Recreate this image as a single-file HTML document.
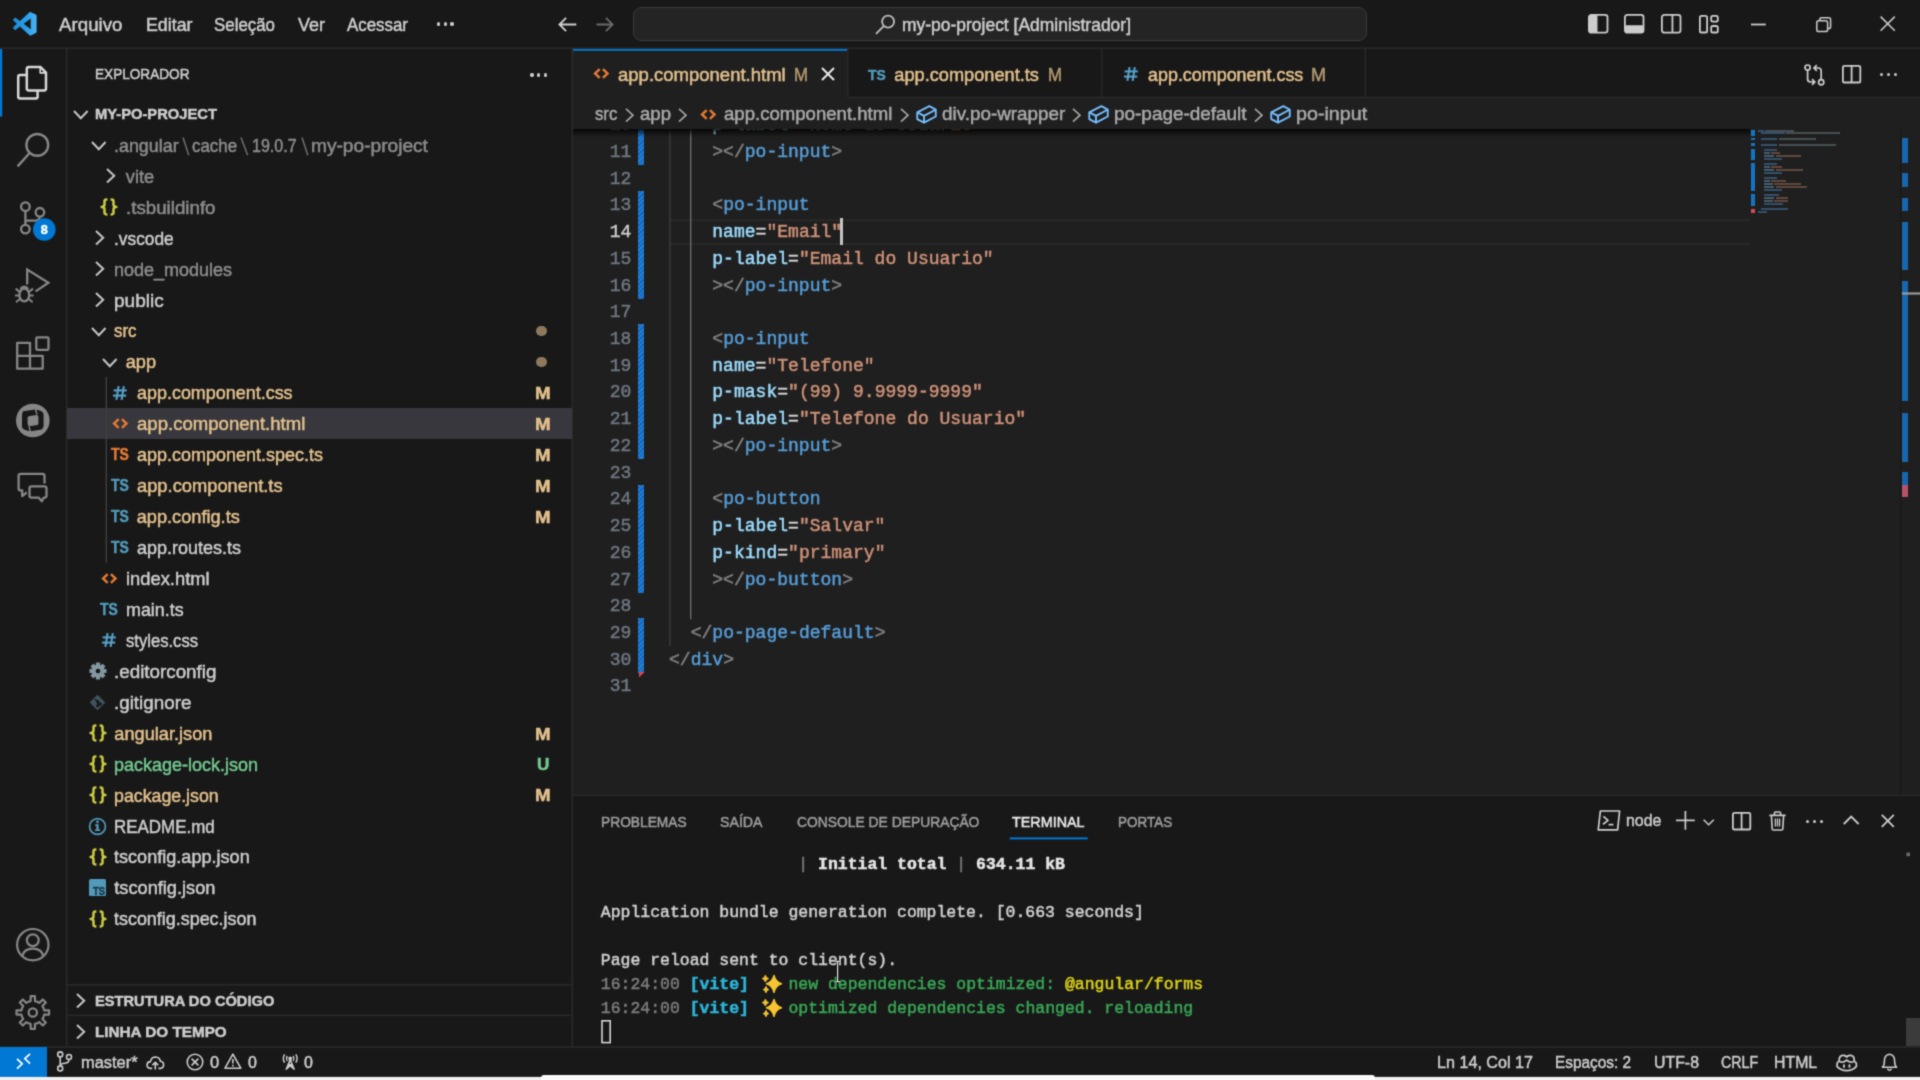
<!DOCTYPE html>
<html lang="pt-BR"><head><meta charset="utf-8"><title>app.component.html - my-po-project - Visual Studio Code</title><style>
html,body{margin:0;padding:0;background:#181818;}
html{width:1920px;height:1080px;overflow:hidden;}
body{width:1920px;height:1080px;position:relative;overflow:hidden;filter:url(#softblur);font-family:"Liberation Sans",sans-serif;color:#ccc;}
.t{position:absolute;line-height:1;white-space:pre;transform-origin:0 0;-webkit-text-stroke:0.5px currentColor;}
.s{font-family:"Liberation Sans",sans-serif;}
.m{font-family:"Liberation Mono",monospace;}
svg{overflow:visible}
</style></head><body>
<svg width="0" height="0" style="position:absolute"><defs><filter id="softblur" x="0" y="0" width="100%" height="100%" color-interpolation-filters="sRGB"><feConvolveMatrix order="3" kernelMatrix="0.0277 0.1110 0.0277 0.1110 0.4452 0.1110 0.0277 0.1110 0.0277" edgeMode="duplicate" preserveAlpha="true"/></filter></defs></svg>
<div style="position:absolute;left:573px;top:48px;width:1347px;height:748px;background:#1f1f1f;"></div>
<div style="position:absolute;left:573px;top:48px;width:1347px;height:50px;background:#181818;"></div>
<div style="position:absolute;left:573px;top:48px;width:274.5px;height:50px;background:#1f1f1f;"></div>
<svg style="position:absolute;left:573px;top:48px" width="275" height="3"><rect x="0.00" y="0.60" width="274.50" height="2.20" fill="#0078d4"/></svg>
<svg style="position:absolute;left:847px;top:96px" width="1073" height="3"><rect x="0.50" y="0.80" width="1072.50" height="1.40" fill="#2b2b2b"/></svg>
<svg style="position:absolute;left:847px;top:49px" width="2" height="48"><rect x="0.20" y="0.00" width="1.30" height="48.00" fill="#2b2b2b"/></svg>
<svg style="position:absolute;left:1101px;top:49px" width="2" height="48"><rect x="0.20" y="0.00" width="1.30" height="48.00" fill="#2b2b2b"/></svg>
<svg style="position:absolute;left:1364px;top:49px" width="2" height="48"><rect x="0.60" y="0.00" width="1.30" height="48.00" fill="#2b2b2b"/></svg>
<svg style="position:absolute;left:0px;top:47px" width="1920" height="2"><rect x="0.00" y="0.50" width="1920.00" height="1.40" fill="#2b2b2b"/></svg>
<svg style="position:absolute;left:66px;top:48px" width="2" height="999"><rect x="0.00" y="0.00" width="1.40" height="999.00" fill="#2b2b2b"/></svg>
<svg style="position:absolute;left:571px;top:48px" width="2" height="999"><rect x="0.60" y="0.00" width="1.40" height="999.00" fill="#2b2b2b"/></svg>
<svg style="position:absolute;left:0px;top:49px" width="3" height="68"><rect x="0.00" y="0.00" width="2.20" height="67.50" fill="#0078d4"/></svg>
<svg style="position:absolute;left:573px;top:795px" width="1347" height="2"><rect x="0.00" y="0.00" width="1347.00" height="1.40" fill="#2b2b2b"/></svg>
<div style="position:absolute;left:573px;top:796.4px;width:1347px;height:251px;background:#181818;"></div>
<svg style="position:absolute;left:0px;top:1046px" width="1920" height="2"><rect x="0.00" y="0.30" width="1920.00" height="1.40" fill="#2b2b2b"/></svg>
<div style="position:absolute;left:0px;top:1047.2px;width:47px;height:29.5px;background:#0078d4;"></div>
<svg style="position:absolute;left:0px;top:1076px" width="1920" height="5"><rect x="0.00" y="0.90" width="1920.00" height="3.40" fill="#f0f0f0"/></svg>
<div style="position:absolute;left:540.8px;top:1074.8px;width:834.2px;height:5.2px;background:#fbfbfb;border-radius:3px 3px 0 0;"></div>
<svg style="position:absolute;left:67px;top:984px" width="505" height="2"><rect x="0.40" y="0.10" width="504.20" height="1.40" fill="#2b2b2b"/></svg>
<svg style="position:absolute;left:67px;top:1014px" width="505" height="3"><rect x="0.40" y="0.70" width="504.20" height="1.40" fill="#2b2b2b"/></svg>
<div style="position:absolute;left:67.4px;top:408.2px;width:504.2px;height:30.9px;background:#37373d;"></div>
<div style="position:absolute;left:633px;top:6.6px;width:732px;height:32px;border:1.4px solid #3c3c3c;border-radius:8.5px;background:#242424"></div>
<span class="t s" style="left:95.0px;top:66.4px;font-size:15.4px;color:#cccccc;transform:scaleX(0.8838);">EXPLORADOR</span>
<div style="position:absolute;left:530.4px;top:73.4px;width:3.3px;height:3.3px;border-radius:50%;background:#ccc"></div>
<div style="position:absolute;left:537.0px;top:73.4px;width:3.3px;height:3.3px;border-radius:50%;background:#ccc"></div>
<div style="position:absolute;left:543.6px;top:73.4px;width:3.3px;height:3.3px;border-radius:50%;background:#ccc"></div>
<span class="t s" style="left:95.0px;top:105.8px;font-size:15.4px;color:#cccccc;font-weight:700;transform:scaleX(0.9567);">MY-PO-PROJECT</span>
<svg style="position:absolute;left:71.5px;top:109.0px" width="17.6" height="11.2"><path d="M2 2 L8.8 9.2 L15.6 2" fill="none" stroke="#c5c5c5" stroke-width="2.0"/></svg>
<span class="t s" style="left:95.0px;top:992.9px;font-size:15.4px;color:#cccccc;font-weight:700;transform:scaleX(0.9517);">ESTRUTURA DO CÓDIGO</span>
<svg style="position:absolute;left:75.4px;top:992.2px" width="11.2" height="17.6"><path d="M2 2 L9.2 8.8 L2 15.6" fill="none" stroke="#c5c5c5" stroke-width="2.0"/></svg>
<span class="t s" style="left:95.0px;top:1024.0px;font-size:15.4px;color:#cccccc;font-weight:700;transform:scaleX(0.9916);">LINHA DO TEMPO</span>
<svg style="position:absolute;left:75.4px;top:1023.2px" width="11.2" height="17.6"><path d="M2 2 L9.2 8.8 L2 15.6" fill="none" stroke="#c5c5c5" stroke-width="2.0"/></svg>
<svg style="position:absolute;left:89.6px;top:140.3px" width="17.6" height="11.2"><path d="M2 2 L8.8 9.2 L15.6 2" fill="none" stroke="#c5c5c5" stroke-width="2.0"/></svg>
<span class="t s" style="left:114.3px;top:136.8px;font-size:18.2px;color:#8c8c8c;transform:scaleX(0.9827);">.angular</span>
<svg style="position:absolute;left:181.9px;top:136.9px" width="7.8" height="19"><path d="M1 0.6 L6.8 18.2" stroke="#6f6f6f" stroke-width="1.5" fill="none"/></svg>
<span class="t s" style="left:192.2px;top:136.8px;font-size:18.2px;color:#8c8c8c;transform:scaleX(0.9290);">cache</span>
<svg style="position:absolute;left:240.3px;top:136.9px" width="8.7" height="19"><path d="M1 0.6 L7.7 18.2" stroke="#6f6f6f" stroke-width="1.5" fill="none"/></svg>
<span class="t s" style="left:251.9px;top:136.8px;font-size:18.2px;color:#8c8c8c;transform:scaleX(0.8818);">19.0.7</span>
<svg style="position:absolute;left:300.9px;top:136.9px" width="7.8" height="19"><path d="M1 0.6 L6.8 18.2" stroke="#6f6f6f" stroke-width="1.5" fill="none"/></svg>
<span class="t s" style="left:310.9px;top:136.8px;font-size:18.2px;color:#8c8c8c;transform:scaleX(1.0514);">my-po-project</span>
<svg style="position:absolute;left:105.0px;top:167.4px" width="11.2" height="17.6"><path d="M2 2 L9.2 8.8 L2 15.6" fill="none" stroke="#c5c5c5" stroke-width="2.0"/></svg>
<span class="t s" style="left:125.8px;top:167.7px;font-size:18.2px;color:#8c8c8c;">vite</span>
<svg style="position:absolute;left:99.5px;top:198.2px" width="18" height="18" viewBox="0 0 18 18"><g fill="none" stroke="#cbcb41" stroke-width="2.5" stroke-linejoin="round" stroke-linecap="butt"><path d="M7.4 1.6 H6.4 Q4.5 1.6 4.5 3.4 V6.6 Q4.5 9 1.6 9 Q4.5 9 4.5 11.4 V14.6 Q4.5 16.4 6.4 16.4 H7.4"/><path d="M10.6 1.6 H11.6 Q13.5 1.6 13.5 3.4 V6.6 Q13.5 9 16.4 9 Q13.5 9 13.5 11.4 V14.6 Q13.5 16.4 11.6 16.4 H10.6"/></g></svg>
<span class="t s" style="left:125.8px;top:198.7px;font-size:18.2px;color:#8c8c8c;transform:scaleX(1.0293);">.tsbuildinfo</span>
<svg style="position:absolute;left:94.0px;top:229.3px" width="11.2" height="17.6"><path d="M2 2 L9.2 8.8 L2 15.6" fill="none" stroke="#c5c5c5" stroke-width="2.0"/></svg>
<span class="t s" style="left:114.3px;top:229.6px;font-size:18.2px;color:#cccccc;transform:scaleX(0.9523);">.vscode</span>
<svg style="position:absolute;left:94.0px;top:260.3px" width="11.2" height="17.6"><path d="M2 2 L9.2 8.8 L2 15.6" fill="none" stroke="#c5c5c5" stroke-width="2.0"/></svg>
<span class="t s" style="left:114.3px;top:260.6px;font-size:18.2px;color:#8c8c8c;transform:scaleX(0.9889);">node_modules</span>
<svg style="position:absolute;left:94.0px;top:291.2px" width="11.2" height="17.6"><path d="M2 2 L9.2 8.8 L2 15.6" fill="none" stroke="#c5c5c5" stroke-width="2.0"/></svg>
<span class="t s" style="left:114.3px;top:291.5px;font-size:18.2px;color:#cccccc;transform:scaleX(1.0456);">public</span>
<svg style="position:absolute;left:90.0px;top:325.9px" width="17.6" height="11.2"><path d="M2 2 L8.8 9.2 L15.6 2" fill="none" stroke="#c5c5c5" stroke-width="2.0"/></svg>
<span class="t s" style="left:114.3px;top:322.4px;font-size:18.2px;color:#e2c08d;transform:scaleX(0.9237);">src</span>
<svg style="position:absolute;left:101.1px;top:356.9px" width="17.6" height="11.2"><path d="M2 2 L8.8 9.2 L15.6 2" fill="none" stroke="#c5c5c5" stroke-width="2.0"/></svg>
<span class="t s" style="left:125.7px;top:353.4px;font-size:18.2px;color:#e2c08d;">app</span>
<div style="position:absolute;left:536.2px;top:325.5px;width:10.8px;height:10.8px;border-radius:50%;background:#8d7a5c"></div>
<div style="position:absolute;left:536.2px;top:356.5px;width:10.8px;height:10.8px;border-radius:50%;background:#8d7a5c"></div>
<svg style="position:absolute;left:105px;top:377px" width="2" height="186"><rect x="0.60" y="0.00" width="1.40" height="185.60" fill="#3f3f3f"/></svg>
<svg style="position:absolute;left:112.3px;top:384.8px" width="16" height="16" viewBox="0 0 16 16"><g fill="none" stroke="#56a0c8" stroke-width="2.1"><path d="M6.6 1.2 L4.4 14.8"/><path d="M11.8 1.2 L9.6 14.8"/><path d="M1.6 5.4 H14.8"/><path d="M1 10.6 H14.2"/></g></svg>
<span class="t s" style="left:136.7px;top:384.3px;font-size:18.2px;color:#e2c08d;transform:scaleX(0.9865);">app.component.css</span>
<span class="t s" style="left:534.6px;top:385.1px;font-size:17px;color:#e2c08d;font-weight:700;transform:scaleX(1.1008);">M</span>
<svg style="position:absolute;left:112.0px;top:417.8px" width="16.6" height="11.0" viewBox="0 0 18 12"><g fill="none" stroke="#e37933" stroke-width="2.7" stroke-linejoin="miter"><path d="M7.2 1.2 L2.2 6 L7.2 10.8"/><path d="M10.8 1.2 L15.8 6 L10.8 10.8"/></g></svg>
<span class="t s" style="left:136.7px;top:415.3px;font-size:18.2px;color:#e2c08d;transform:scaleX(1.0212);">app.component.html</span>
<span class="t s" style="left:534.6px;top:416.1px;font-size:17px;color:#e2c08d;font-weight:700;transform:scaleX(1.1008);">M</span>
<span class="t s" style="left:111.4px;top:447.2px;font-size:15.6px;color:#e37933;font-weight:700;transform:scaleX(0.8928);">TS</span>
<span class="t s" style="left:136.7px;top:446.2px;font-size:18.2px;color:#e2c08d;transform:scaleX(0.9890);">app.component.spec.ts</span>
<span class="t s" style="left:534.6px;top:447.0px;font-size:17px;color:#e2c08d;font-weight:700;transform:scaleX(1.1008);">M</span>
<span class="t s" style="left:111.4px;top:478.1px;font-size:15.6px;color:#519aba;font-weight:700;transform:scaleX(0.8928);">TS</span>
<span class="t s" style="left:136.7px;top:477.1px;font-size:18.2px;color:#e2c08d;transform:scaleX(1.0070);">app.component.ts</span>
<span class="t s" style="left:534.6px;top:477.9px;font-size:17px;color:#e2c08d;font-weight:700;transform:scaleX(1.1008);">M</span>
<span class="t s" style="left:111.4px;top:509.1px;font-size:15.6px;color:#519aba;font-weight:700;transform:scaleX(0.8928);">TS</span>
<span class="t s" style="left:136.7px;top:508.1px;font-size:18.2px;color:#e2c08d;">app.config.ts</span>
<span class="t s" style="left:534.6px;top:508.9px;font-size:17px;color:#e2c08d;font-weight:700;transform:scaleX(1.1008);">M</span>
<span class="t s" style="left:111.4px;top:540.0px;font-size:15.6px;color:#519aba;font-weight:700;transform:scaleX(0.8928);">TS</span>
<span class="t s" style="left:136.7px;top:539.0px;font-size:18.2px;color:#cccccc;transform:scaleX(0.9890);">app.routes.ts</span>
<svg style="position:absolute;left:100.5px;top:572.5px" width="16.6" height="11.0" viewBox="0 0 18 12"><g fill="none" stroke="#e37933" stroke-width="2.7" stroke-linejoin="miter"><path d="M7.2 1.2 L2.2 6 L7.2 10.8"/><path d="M10.8 1.2 L15.8 6 L10.8 10.8"/></g></svg>
<span class="t s" style="left:125.7px;top:570.0px;font-size:18.2px;color:#cccccc;transform:scaleX(1.0084);">index.html</span>
<span class="t s" style="left:99.9px;top:601.9px;font-size:15.6px;color:#519aba;font-weight:700;transform:scaleX(0.8928);">TS</span>
<span class="t s" style="left:125.7px;top:600.9px;font-size:18.2px;color:#cccccc;transform:scaleX(0.9825);">main.ts</span>
<svg style="position:absolute;left:100.8px;top:632.3px" width="16" height="16" viewBox="0 0 16 16"><g fill="none" stroke="#56a0c8" stroke-width="2.1"><path d="M6.6 1.2 L4.4 14.8"/><path d="M11.8 1.2 L9.6 14.8"/><path d="M1.6 5.4 H14.8"/><path d="M1 10.6 H14.2"/></g></svg>
<span class="t s" style="left:125.7px;top:631.8px;font-size:18.2px;color:#cccccc;transform:scaleX(0.9134);">styles.css</span>
<svg style="position:absolute;left:88.6px;top:662.3px" width="18" height="18" viewBox="-9 -9 18 18"><g fill="#8497a0"><rect x="-2.1" y="-8.5" width="4.2" height="4" rx="0.6" transform="rotate(0)"/><rect x="-2.1" y="-8.5" width="4.2" height="4" rx="0.6" transform="rotate(45)"/><rect x="-2.1" y="-8.5" width="4.2" height="4" rx="0.6" transform="rotate(90)"/><rect x="-2.1" y="-8.5" width="4.2" height="4" rx="0.6" transform="rotate(135)"/><rect x="-2.1" y="-8.5" width="4.2" height="4" rx="0.6" transform="rotate(180)"/><rect x="-2.1" y="-8.5" width="4.2" height="4" rx="0.6" transform="rotate(225)"/><rect x="-2.1" y="-8.5" width="4.2" height="4" rx="0.6" transform="rotate(270)"/><rect x="-2.1" y="-8.5" width="4.2" height="4" rx="0.6" transform="rotate(315)"/></g><circle r="4.4" fill="none" stroke="#8497a0" stroke-width="4.2"/></svg>
<span class="t s" style="left:114.3px;top:662.8px;font-size:18.2px;color:#cccccc;transform:scaleX(1.0334);">.editorconfig</span>
<svg style="position:absolute;left:89.1px;top:693.7px" width="17" height="17" viewBox="-8.5 -8.5 17 17"><rect x="-5.6" y="-5.6" width="11.2" height="11.2" rx="1.2" transform="rotate(45)" fill="#41535b"/><g stroke="#181818" stroke-width="1.3" fill="#181818"><path d="M-2.5 -3.5 L0.2 -0.8 M0.2 -0.8 V3.4 M0.2 -0.8 L2.8 1.6" fill="none"/><circle cx="0.2" cy="3.2" r="1"/><circle cx="2.8" cy="1.6" r="1"/><circle cx="0.2" cy="-0.8" r="1"/></g></svg>
<span class="t s" style="left:114.3px;top:693.7px;font-size:18.2px;color:#cccccc;transform:scaleX(1.0344);">.gitignore</span>
<svg style="position:absolute;left:88.6px;top:724.2px" width="18" height="18" viewBox="0 0 18 18"><g fill="none" stroke="#cbcb41" stroke-width="2.5" stroke-linejoin="round" stroke-linecap="butt"><path d="M7.4 1.6 H6.4 Q4.5 1.6 4.5 3.4 V6.6 Q4.5 9 1.6 9 Q4.5 9 4.5 11.4 V14.6 Q4.5 16.4 6.4 16.4 H7.4"/><path d="M10.6 1.6 H11.6 Q13.5 1.6 13.5 3.4 V6.6 Q13.5 9 16.4 9 Q13.5 9 13.5 11.4 V14.6 Q13.5 16.4 11.6 16.4 H10.6"/></g></svg>
<span class="t s" style="left:114.3px;top:724.7px;font-size:18.2px;color:#e2c08d;">angular.json</span>
<span class="t s" style="left:534.6px;top:725.5px;font-size:17px;color:#e2c08d;font-weight:700;transform:scaleX(1.1008);">M</span>
<svg style="position:absolute;left:88.6px;top:755.1px" width="18" height="18" viewBox="0 0 18 18"><g fill="none" stroke="#cbcb41" stroke-width="2.5" stroke-linejoin="round" stroke-linecap="butt"><path d="M7.4 1.6 H6.4 Q4.5 1.6 4.5 3.4 V6.6 Q4.5 9 1.6 9 Q4.5 9 4.5 11.4 V14.6 Q4.5 16.4 6.4 16.4 H7.4"/><path d="M10.6 1.6 H11.6 Q13.5 1.6 13.5 3.4 V6.6 Q13.5 9 16.4 9 Q13.5 9 13.5 11.4 V14.6 Q13.5 16.4 11.6 16.4 H10.6"/></g></svg>
<span class="t s" style="left:114.3px;top:755.6px;font-size:18.2px;color:#73c991;transform:scaleX(0.9891);">package-lock.json</span>
<span class="t s" style="left:537.4px;top:756.4px;font-size:17px;color:#73c991;font-weight:700;transform:scaleX(1.0097);">U</span>
<svg style="position:absolute;left:88.6px;top:786.0px" width="18" height="18" viewBox="0 0 18 18"><g fill="none" stroke="#cbcb41" stroke-width="2.5" stroke-linejoin="round" stroke-linecap="butt"><path d="M7.4 1.6 H6.4 Q4.5 1.6 4.5 3.4 V6.6 Q4.5 9 1.6 9 Q4.5 9 4.5 11.4 V14.6 Q4.5 16.4 6.4 16.4 H7.4"/><path d="M10.6 1.6 H11.6 Q13.5 1.6 13.5 3.4 V6.6 Q13.5 9 16.4 9 Q13.5 9 13.5 11.4 V14.6 Q13.5 16.4 11.6 16.4 H10.6"/></g></svg>
<span class="t s" style="left:114.3px;top:786.5px;font-size:18.2px;color:#e2c08d;transform:scaleX(0.9768);">package.json</span>
<span class="t s" style="left:534.6px;top:787.3px;font-size:17px;color:#e2c08d;font-weight:700;transform:scaleX(1.1008);">M</span>
<svg style="position:absolute;left:88.1px;top:816.5px" width="19" height="19" viewBox="-9.5 -9.5 19 19"><circle r="7.9" fill="none" stroke="#519aba" stroke-width="1.7"/><rect x="-1.2" y="-2.2" width="2.4" height="6.6" fill="#519aba"/><rect x="-2.4" y="-2.2" width="2.4" height="1.6" fill="#519aba"/><rect x="-2.6" y="3" width="5.2" height="1.5" fill="#519aba"/><circle cy="-4.6" r="1.4" fill="#519aba"/></svg>
<span class="t s" style="left:114.3px;top:817.5px;font-size:18.2px;color:#cccccc;transform:scaleX(0.9312);">README.md</span>
<svg style="position:absolute;left:88.6px;top:847.9px" width="18" height="18" viewBox="0 0 18 18"><g fill="none" stroke="#cbcb41" stroke-width="2.5" stroke-linejoin="round" stroke-linecap="butt"><path d="M7.4 1.6 H6.4 Q4.5 1.6 4.5 3.4 V6.6 Q4.5 9 1.6 9 Q4.5 9 4.5 11.4 V14.6 Q4.5 16.4 6.4 16.4 H7.4"/><path d="M10.6 1.6 H11.6 Q13.5 1.6 13.5 3.4 V6.6 Q13.5 9 16.4 9 Q13.5 9 13.5 11.4 V14.6 Q13.5 16.4 11.6 16.4 H10.6"/></g></svg>
<span class="t s" style="left:114.3px;top:848.4px;font-size:18.2px;color:#cccccc;transform:scaleX(0.9941);">tsconfig.app.json</span>
<div style="position:absolute;left:88.8px;top:879.3px;width:17.6px;height:17.2px;background:#519aba;border-radius:1.5px"></div>
<span class="t s" style="left:93.0px;top:886.2px;font-size:10.5px;color:#1c3a4a;font-weight:700;transform:scaleX(0.8941);">TS</span>
<span class="t s" style="left:114.3px;top:879.4px;font-size:18.2px;color:#cccccc;">tsconfig.json</span>
<svg style="position:absolute;left:88.6px;top:909.8px" width="18" height="18" viewBox="0 0 18 18"><g fill="none" stroke="#cbcb41" stroke-width="2.5" stroke-linejoin="round" stroke-linecap="butt"><path d="M7.4 1.6 H6.4 Q4.5 1.6 4.5 3.4 V6.6 Q4.5 9 1.6 9 Q4.5 9 4.5 11.4 V14.6 Q4.5 16.4 6.4 16.4 H7.4"/><path d="M10.6 1.6 H11.6 Q13.5 1.6 13.5 3.4 V6.6 Q13.5 9 16.4 9 Q13.5 9 13.5 11.4 V14.6 Q13.5 16.4 11.6 16.4 H10.6"/></g></svg>
<span class="t s" style="left:114.3px;top:910.3px;font-size:18.2px;color:#cccccc;transform:scaleX(0.9849);">tsconfig.spec.json</span>
<svg style="position:absolute;left:12.8px;top:12.2px" width="23.6" height="23.6" viewBox="0 0 100 100"><defs><linearGradient id="vg" x1="0" x2="1" y1="0" y2="0"><stop offset="0" stop-color="#1f88d6"/><stop offset="0.6" stop-color="#2c9fec"/><stop offset="1" stop-color="#4ab4f6"/></linearGradient></defs><path fill="url(#vg)" fill-rule="evenodd" d="M70.9119 99.3171C72.4869 99.9307 74.2828 99.8914 75.8725 99.1264L96.4608 89.2197C98.6242 88.1787 100 85.9892 100 83.5872V16.4133C100 14.0113 98.6243 11.8218 96.4609 10.7808L75.8725 0.873756C73.7862 -0.130129 71.3446 0.11576 69.5135 1.44695C69.252 1.63711 69.0028 1.84943 68.769 2.08341L29.3551 38.0415L12.1872 25.0096C10.589 23.7965 8.35363 23.8959 6.86933 25.2461L1.36303 30.2549C-0.452552 31.9064 -0.454633 34.7627 1.35853 36.417L16.2471 50.0001L1.35853 63.5832C-0.454633 65.2374 -0.452552 68.0938 1.36303 69.7453L6.86933 74.7541C8.35363 76.1043 10.589 76.2037 12.1872 74.9905L29.3551 61.9587L68.769 97.9167C69.3925 98.5406 70.1246 99.0104 70.9119 99.3171ZM75.0152 27.2989L45.1091 50.0001L75.0152 72.7012V27.2989Z"/></svg>
<span class="t s" style="left:59.0px;top:16.0px;font-size:18.2px;color:#ccc;transform:scaleX(1.0296);">Arquivo</span>
<span class="t s" style="left:145.5px;top:16.0px;font-size:18.2px;color:#ccc;transform:scaleX(0.9786);">Editar</span>
<span class="t s" style="left:214.0px;top:16.0px;font-size:18.2px;color:#ccc;transform:scaleX(0.9280);">Seleção</span>
<span class="t s" style="left:297.5px;top:16.0px;font-size:18.2px;color:#ccc;transform:scaleX(0.9886);">Ver</span>
<span class="t s" style="left:347.0px;top:16.0px;font-size:18.2px;color:#ccc;transform:scaleX(0.9284);">Acessar</span>
<div style="position:absolute;left:436.6px;top:22.4px;width:3.5px;height:3.5px;border-radius:50%;background:#ccc"></div>
<div style="position:absolute;left:443.5px;top:22.4px;width:3.5px;height:3.5px;border-radius:50%;background:#ccc"></div>
<div style="position:absolute;left:450.4px;top:22.4px;width:3.5px;height:3.5px;border-radius:50%;background:#ccc"></div>
<svg style="position:absolute;left:558.4px;top:17.1px" width="18.800000000000068" height="15"><path d="M18.300000000000068 7.5 H1.4 M8.1 0.8 L1.4 7.5 L8.1 14.2" fill="none" stroke="#d0d0d0" stroke-width="1.8"/></svg>
<svg style="position:absolute;left:595.8px;top:17.1px" width="18.0" height="15"><path d="M0.5 7.5 H16.6 M9.9 0.8 L16.6 7.5 L9.9 14.2" fill="none" stroke="#6a6a6a" stroke-width="1.8"/></svg>
<svg style="position:absolute;left:875px;top:13.6px" width="21" height="21" viewBox="0 0 21 21"><circle cx="13.1" cy="7.6" r="6" fill="none" stroke="#bdbdbd" stroke-width="1.8"/><path d="M8.9 11.9 L1 19.8" stroke="#bdbdbd" stroke-width="1.9" fill="none"/></svg>
<span class="t s" style="left:901.7px;top:16.5px;font-size:17.8px;color:#cccccc;transform:scaleX(0.9819);">my-po-project [Administrador]</span>
<svg style="position:absolute;left:1587.6px;top:14px" width="20.4" height="19.6"><rect x="0.9" y="0.9" width="18.599999999999998" height="17.8" rx="2.4" fill="none" stroke="#cccccc" stroke-width="1.8"/><rect x="0.9" y="0.9" width="8.568" height="17.8" rx="1.5" fill="#cccccc"/></svg>
<svg style="position:absolute;left:1623.8px;top:14px" width="20.4" height="19.6"><rect x="0.9" y="0.9" width="18.599999999999998" height="17.8" rx="2.4" fill="none" stroke="#cccccc" stroke-width="1.8"/><rect x="0.9" y="11.368" width="18.599999999999998" height="7.332000000000001" rx="1.5" fill="#cccccc"/></svg>
<svg style="position:absolute;left:1660.8px;top:14px" width="20.4" height="19.6"><rect x="0.9" y="0.9" width="18.599999999999998" height="17.8" rx="2.4" fill="none" stroke="#cccccc" stroke-width="1.8"/><path d="M11.424 1 V18.6" stroke="#cccccc" stroke-width="1.8"/></svg>
<svg style="position:absolute;left:1698.6px;top:14.6px" width="20" height="19"><g fill="none" stroke="#cccccc" stroke-width="1.8"><rect x="0.9" y="0.9" width="7.2" height="16.6" rx="1.6"/><rect x="12.2" y="0.9" width="6.6" height="5.8" rx="1.6"/><rect x="12.2" y="11" width="6.6" height="6.5" rx="1.6"/></g></svg>
<svg style="position:absolute;left:1751px;top:23px" width="15" height="3"><rect x="0.00" y="0.60" width="14.80" height="1.80" fill="#cccccc"/></svg>
<svg style="position:absolute;left:1815.6px;top:16.6px" width="16" height="16"><g fill="none" stroke="#cccccc" stroke-width="1.5"><rect x="0.8" y="3.8" width="10.8" height="10.8" rx="1.8"/><path d="M3.8 3.6 V2.6 Q3.8 0.8 5.6 0.8 H12.6 Q14.6 0.8 14.6 2.8 V9.8 Q14.6 11.6 12.8 11.6 H11.8"/></g></svg>
<svg style="position:absolute;left:1880px;top:16.4px" width="15.4" height="15.4"><path d="M0.6 0.6 L14.8 14.8 M14.8 0.6 L0.6 14.8" stroke="#cccccc" stroke-width="1.5" fill="none"/></svg>
<svg style="position:absolute;left:593.3px;top:67.9px" width="16.6" height="11.0" viewBox="0 0 18 12"><g fill="none" stroke="#e37933" stroke-width="2.7" stroke-linejoin="miter"><path d="M7.2 1.2 L2.2 6 L7.2 10.8"/><path d="M10.8 1.2 L15.8 6 L10.8 10.8"/></g></svg>
<span class="t s" style="left:618.3px;top:66.2px;font-size:18.2px;color:#e2c08d;transform:scaleX(1.0175);">app.component.html</span>
<span class="t s" style="left:794.3px;top:66.2px;font-size:18.2px;color:#b39a70;transform:scaleX(0.9237);">M</span>
<svg style="position:absolute;left:821.4px;top:67.2px" width="14" height="14"><path d="M1 1 L13 13 M13 1 L1 13" stroke="#e8e8e8" stroke-width="2" fill="none"/></svg>
<span class="t s" style="left:868.3px;top:66.7px;font-size:15.5px;color:#519aba;font-weight:700;transform:scaleX(0.8934);">TS</span>
<span class="t s" style="left:894.3px;top:66.2px;font-size:18.2px;color:#e2c08d;">app.component.ts</span>
<span class="t s" style="left:1047.7px;top:66.2px;font-size:18.2px;color:#b39a70;transform:scaleX(0.9237);">M</span>
<svg style="position:absolute;left:1122.5px;top:65.6px" width="16" height="16" viewBox="0 0 16 16"><g fill="none" stroke="#56a0c8" stroke-width="2.1"><path d="M6.6 1.2 L4.4 14.8"/><path d="M11.8 1.2 L9.6 14.8"/><path d="M1.6 5.4 H14.8"/><path d="M1 10.6 H14.2"/></g></svg>
<span class="t s" style="left:1147.7px;top:66.2px;font-size:18.2px;color:#e2c08d;transform:scaleX(0.9846);">app.component.css</span>
<span class="t s" style="left:1310.6px;top:66.2px;font-size:18.2px;color:#b39a70;transform:scaleX(0.9897);">M</span>
<svg style="position:absolute;left:1804.4px;top:64.4px" width="21" height="22" viewBox="0 0 21 22"><g fill="none" stroke="#cccccc" stroke-width="1.7"><circle cx="3.6" cy="3.6" r="2.6"/><circle cx="17.2" cy="18.2" r="2.6"/><path d="M3.6 6.4 V15 Q3.6 18 6.6 18 H10.4 M8 15.2 L10.8 18 L8 20.8"/><path d="M17.2 15.4 V7 Q17.2 4 14.2 4 H10.4 M12.8 1.2 L10 4 L12.8 6.8"/></g></svg>
<svg style="position:absolute;left:1842.4px;top:64.6px" width="19.2" height="18.4"><g fill="none" stroke="#cccccc" stroke-width="1.8"><rect x="0.9" y="0.9" width="17.4" height="16.6" rx="1.6"/><path d="M9.6 1 V17.4"/></g></svg>
<div style="position:absolute;left:1879.6px;top:72.8px;width:3.5px;height:3.5px;border-radius:50%;background:#ccc"></div>
<div style="position:absolute;left:1886.6px;top:72.8px;width:3.5px;height:3.5px;border-radius:50%;background:#ccc"></div>
<div style="position:absolute;left:1893.6px;top:72.8px;width:3.5px;height:3.5px;border-radius:50%;background:#ccc"></div>
<span class="t s" style="left:595.0px;top:105.1px;font-size:18.2px;color:#a9a9a9;transform:scaleX(0.9196);">src</span>
<svg style="position:absolute;left:625.0px;top:108.0px" width="9.4" height="14.4"><path d="M1 0.8 L8.0 7.2 L1 13.6" fill="none" stroke="#a9a9a9" stroke-width="1.6"/></svg>
<span class="t s" style="left:640.0px;top:105.1px;font-size:18.2px;color:#a9a9a9;transform:scaleX(1.0211);">app</span>
<svg style="position:absolute;left:678.3px;top:108.0px" width="9.4" height="14.4"><path d="M1 0.8 L8.0 7.2 L1 13.6" fill="none" stroke="#a9a9a9" stroke-width="1.6"/></svg>
<svg style="position:absolute;left:699.7px;top:108.7px" width="16.6" height="11.0" viewBox="0 0 18 12"><g fill="none" stroke="#e37933" stroke-width="2.7" stroke-linejoin="miter"><path d="M7.2 1.2 L2.2 6 L7.2 10.8"/><path d="M10.8 1.2 L15.8 6 L10.8 10.8"/></g></svg>
<span class="t s" style="left:724.3px;top:105.1px;font-size:18.2px;color:#a9a9a9;transform:scaleX(1.0218);">app.component.html</span>
<svg style="position:absolute;left:900.0px;top:108.0px" width="9.4" height="14.4"><path d="M1 0.8 L8.0 7.2 L1 13.6" fill="none" stroke="#a9a9a9" stroke-width="1.6"/></svg>
<svg style="position:absolute;left:915.7px;top:105.1px" width="21" height="18.9" viewBox="0 0 21 19"><g fill="none" stroke="#75beff" stroke-width="1.9" stroke-linejoin="round"><path d="M13.4 1.2 L19.8 4.6 V11.6 L8 17.8 L1.2 14.2 V7.4 Z"/><path d="M1.4 7.4 L8 11 L19.6 4.8 M8 11 V17.6"/></g></svg>
<span class="t s" style="left:941.7px;top:105.1px;font-size:18.2px;color:#a9a9a9;transform:scaleX(1.0365);">div.po-wrapper</span>
<svg style="position:absolute;left:1072.3px;top:108.0px" width="9.4" height="14.4"><path d="M1 0.8 L8.0 7.2 L1 13.6" fill="none" stroke="#a9a9a9" stroke-width="1.6"/></svg>
<svg style="position:absolute;left:1088.3px;top:105.1px" width="21" height="18.9" viewBox="0 0 21 19"><g fill="none" stroke="#75beff" stroke-width="1.9" stroke-linejoin="round"><path d="M13.4 1.2 L19.8 4.6 V11.6 L8 17.8 L1.2 14.2 V7.4 Z"/><path d="M1.4 7.4 L8 11 L19.6 4.8 M8 11 V17.6"/></g></svg>
<span class="t s" style="left:1114.3px;top:105.1px;font-size:18.2px;color:#a9a9a9;transform:scaleX(1.0406);">po-page-default</span>
<svg style="position:absolute;left:1254.4px;top:108.0px" width="9.4" height="14.4"><path d="M1 0.8 L8.0 7.2 L1 13.6" fill="none" stroke="#a9a9a9" stroke-width="1.6"/></svg>
<svg style="position:absolute;left:1270.0px;top:105.1px" width="21" height="18.9" viewBox="0 0 21 19"><g fill="none" stroke="#75beff" stroke-width="1.9" stroke-linejoin="round"><path d="M13.4 1.2 L19.8 4.6 V11.6 L8 17.8 L1.2 14.2 V7.4 Z"/><path d="M1.4 7.4 L8 11 L19.6 4.8 M8 11 V17.6"/></g></svg>
<span class="t s" style="left:1296.4px;top:105.1px;font-size:18.2px;color:#a9a9a9;transform:scaleX(1.0831);">po-input</span>
<div style="position:absolute;left:573px;top:128.8px;width:1327.4px;height:666.2px;overflow:hidden">
<svg style="position:absolute;left:96px;top:90px" width="1081" height="2"><rect x="0.40" y="0.40" width="1080.60" height="1.40" fill="#2c2c2c"/></svg>
<svg style="position:absolute;left:96px;top:114px" width="1081" height="2"><rect x="0.40" y="0.32" width="1080.60" height="1.40" fill="#2c2c2c"/></svg>
<svg style="position:absolute;left:96px;top:0px" width="2" height="518"><rect x="0.20" y="0.00" width="1.40" height="517.02" fill="#3b3b3b"/></svg>
<svg style="position:absolute;left:117px;top:0px" width="2" height="491"><rect x="0.00" y="0.00" width="1.40" height="490.30" fill="#6a6a6a"/></svg>
<div style="position:absolute;left:65.2px;top:-18.1px;width:5.8px;height:54.4px;background:repeating-linear-gradient(135deg,#2380d8 0 1.6px,#1468bd 1.6px 3.2px)"></div>
<div style="position:absolute;left:65.2px;top:62.1px;width:5.8px;height:107.9px;background:repeating-linear-gradient(135deg,#2380d8 0 1.6px,#1468bd 1.6px 3.2px)"></div>
<div style="position:absolute;left:65.2px;top:195.7px;width:5.8px;height:134.6px;background:repeating-linear-gradient(135deg,#2380d8 0 1.6px,#1468bd 1.6px 3.2px)"></div>
<div style="position:absolute;left:65.2px;top:356.0px;width:5.8px;height:107.9px;background:repeating-linear-gradient(135deg,#2380d8 0 1.6px,#1468bd 1.6px 3.2px)"></div>
<div style="position:absolute;left:65.2px;top:489.6px;width:5.8px;height:54.4px;background:repeating-linear-gradient(135deg,#2380d8 0 1.6px,#1468bd 1.6px 3.2px)"></div>
<svg style="position:absolute;left:66.0px;top:543.2px" width="6" height="6"><path d="M0 0 H5.6 L0 5.6 Z" fill="#e0424f"/></svg>
<span class="t m" style="left:36.7px;top:-12.5px;font-size:18.05px;color:#6e7681">10</span>
<span class="t m" style="left:96.0px;top:-12.5px;font-size:18.05px"><span style="color:#d4d4d4">    </span><span style="color:#9cdcfe">p-label</span><span style="color:#d4d4d4">=</span><span style="color:#ce9178">"Nome do Usuario"</span></span>
<span class="t m" style="left:36.7px;top:14.3px;font-size:18.05px;color:#6e7681">11</span>
<span class="t m" style="left:96.0px;top:14.3px;font-size:18.05px"><span style="color:#d4d4d4">    </span><span style="color:#808080">&gt;&lt;/</span><span style="color:#569cd6">po-input</span><span style="color:#808080">&gt;</span></span>
<span class="t m" style="left:36.7px;top:41.0px;font-size:18.05px;color:#6e7681">12</span>
<span class="t m" style="left:36.7px;top:67.7px;font-size:18.05px;color:#6e7681">13</span>
<span class="t m" style="left:96.0px;top:67.7px;font-size:18.05px"><span style="color:#d4d4d4">    </span><span style="color:#808080">&lt;</span><span style="color:#569cd6">po-input</span></span>
<span class="t m" style="left:36.7px;top:94.4px;font-size:18.05px;color:#cccccc">14</span>
<span class="t m" style="left:96.0px;top:94.4px;font-size:18.05px"><span style="color:#d4d4d4">    </span><span style="color:#9cdcfe">name</span><span style="color:#d4d4d4">=</span><span style="color:#ce9178">"Email"</span></span>
<span class="t m" style="left:36.7px;top:121.1px;font-size:18.05px;color:#6e7681">15</span>
<span class="t m" style="left:96.0px;top:121.1px;font-size:18.05px"><span style="color:#d4d4d4">    </span><span style="color:#9cdcfe">p-label</span><span style="color:#d4d4d4">=</span><span style="color:#ce9178">"Email do Usuario"</span></span>
<span class="t m" style="left:36.7px;top:147.9px;font-size:18.05px;color:#6e7681">16</span>
<span class="t m" style="left:96.0px;top:147.9px;font-size:18.05px"><span style="color:#d4d4d4">    </span><span style="color:#808080">&gt;&lt;/</span><span style="color:#569cd6">po-input</span><span style="color:#808080">&gt;</span></span>
<span class="t m" style="left:36.7px;top:174.6px;font-size:18.05px;color:#6e7681">17</span>
<span class="t m" style="left:36.7px;top:201.3px;font-size:18.05px;color:#6e7681">18</span>
<span class="t m" style="left:96.0px;top:201.3px;font-size:18.05px"><span style="color:#d4d4d4">    </span><span style="color:#808080">&lt;</span><span style="color:#569cd6">po-input</span></span>
<span class="t m" style="left:36.7px;top:228.0px;font-size:18.05px;color:#6e7681">19</span>
<span class="t m" style="left:96.0px;top:228.0px;font-size:18.05px"><span style="color:#d4d4d4">    </span><span style="color:#9cdcfe">name</span><span style="color:#d4d4d4">=</span><span style="color:#ce9178">"Telefone"</span></span>
<span class="t m" style="left:36.7px;top:254.7px;font-size:18.05px;color:#6e7681">20</span>
<span class="t m" style="left:96.0px;top:254.7px;font-size:18.05px"><span style="color:#d4d4d4">    </span><span style="color:#9cdcfe">p-mask</span><span style="color:#d4d4d4">=</span><span style="color:#ce9178">"(99) 9.9999-9999"</span></span>
<span class="t m" style="left:36.7px;top:281.5px;font-size:18.05px;color:#6e7681">21</span>
<span class="t m" style="left:96.0px;top:281.5px;font-size:18.05px"><span style="color:#d4d4d4">    </span><span style="color:#9cdcfe">p-label</span><span style="color:#d4d4d4">=</span><span style="color:#ce9178">"Telefone do Usuario"</span></span>
<span class="t m" style="left:36.7px;top:308.2px;font-size:18.05px;color:#6e7681">22</span>
<span class="t m" style="left:96.0px;top:308.2px;font-size:18.05px"><span style="color:#d4d4d4">    </span><span style="color:#808080">&gt;&lt;/</span><span style="color:#569cd6">po-input</span><span style="color:#808080">&gt;</span></span>
<span class="t m" style="left:36.7px;top:334.9px;font-size:18.05px;color:#6e7681">23</span>
<span class="t m" style="left:36.7px;top:361.6px;font-size:18.05px;color:#6e7681">24</span>
<span class="t m" style="left:96.0px;top:361.6px;font-size:18.05px"><span style="color:#d4d4d4">    </span><span style="color:#808080">&lt;</span><span style="color:#569cd6">po-button</span></span>
<span class="t m" style="left:36.7px;top:388.3px;font-size:18.05px;color:#6e7681">25</span>
<span class="t m" style="left:96.0px;top:388.3px;font-size:18.05px"><span style="color:#d4d4d4">    </span><span style="color:#9cdcfe">p-label</span><span style="color:#d4d4d4">=</span><span style="color:#ce9178">"Salvar"</span></span>
<span class="t m" style="left:36.7px;top:415.1px;font-size:18.05px;color:#6e7681">26</span>
<span class="t m" style="left:96.0px;top:415.1px;font-size:18.05px"><span style="color:#d4d4d4">    </span><span style="color:#9cdcfe">p-kind</span><span style="color:#d4d4d4">=</span><span style="color:#ce9178">"primary"</span></span>
<span class="t m" style="left:36.7px;top:441.8px;font-size:18.05px;color:#6e7681">27</span>
<span class="t m" style="left:96.0px;top:441.8px;font-size:18.05px"><span style="color:#d4d4d4">    </span><span style="color:#808080">&gt;&lt;/</span><span style="color:#569cd6">po-button</span><span style="color:#808080">&gt;</span></span>
<span class="t m" style="left:36.7px;top:468.5px;font-size:18.05px;color:#6e7681">28</span>
<span class="t m" style="left:36.7px;top:495.2px;font-size:18.05px;color:#6e7681">29</span>
<span class="t m" style="left:96.0px;top:495.2px;font-size:18.05px"><span style="color:#d4d4d4">  </span><span style="color:#808080">&lt;/</span><span style="color:#569cd6">po-page-default</span><span style="color:#808080">&gt;</span></span>
<span class="t m" style="left:36.7px;top:521.9px;font-size:18.05px;color:#6e7681">30</span>
<span class="t m" style="left:96.0px;top:521.9px;font-size:18.05px"><span style="color:#808080">&lt;/</span><span style="color:#569cd6">div</span><span style="color:#808080">&gt;</span></span>
<span class="t m" style="left:36.7px;top:548.7px;font-size:18.05px;color:#6e7681">31</span>
<div style="position:absolute;left:267.4px;top:89.5px;width:2.6px;height:26.7px;background:#c4c4c4"></div>
<div style="position:absolute;left:0;top:0;width:1177px;height:8px;background:linear-gradient(#000000d0,#00000000)"></div>
</div>
<div style="position:absolute;left:1757.5px;top:129.6px;width:6.0px;height:2px;background:#3f6f9e;opacity:.62"></div>
<div style="position:absolute;left:1765.0px;top:129.6px;width:28.5px;height:2px;background:#6f7f86;opacity:.5"></div>
<div style="position:absolute;left:1760.5px;top:132.4px;width:24.0px;height:2px;background:#3f6f9e;opacity:.62"></div>
<div style="position:absolute;left:1786.0px;top:132.4px;width:54.0px;height:2px;background:#6f7f86;opacity:.5"></div>
<div style="position:absolute;left:1760.5px;top:138.0px;width:16.5px;height:2px;background:#3f6f9e;opacity:.62"></div>
<div style="position:absolute;left:1778.5px;top:138.0px;width:37.5px;height:2px;background:#6f7f86;opacity:.5"></div>
<div style="position:absolute;left:1760.5px;top:143.7px;width:16.5px;height:2px;background:#3f6f9e;opacity:.62"></div>
<div style="position:absolute;left:1778.5px;top:143.7px;width:57.0px;height:2px;background:#6f7f86;opacity:.5"></div>
<div style="position:absolute;left:1763.5px;top:149.3px;width:13.5px;height:2px;background:#3f6f9e;opacity:.62"></div>
<div style="position:absolute;left:1763.5px;top:152.1px;width:6.0px;height:2px;background:#5f87a0;opacity:.6"></div>
<div style="position:absolute;left:1771.0px;top:152.1px;width:9.0px;height:2px;background:#8a6350;opacity:.62"></div>
<div style="position:absolute;left:1763.5px;top:154.9px;width:10.5px;height:2px;background:#5f87a0;opacity:.6"></div>
<div style="position:absolute;left:1775.5px;top:154.9px;width:25.5px;height:2px;background:#8a6350;opacity:.62"></div>
<div style="position:absolute;left:1763.5px;top:157.7px;width:18.0px;height:2px;background:#3f6f9e;opacity:.62"></div>
<div style="position:absolute;left:1763.5px;top:163.3px;width:13.5px;height:2px;background:#3f6f9e;opacity:.62"></div>
<div style="position:absolute;left:1763.5px;top:166.1px;width:6.0px;height:2px;background:#5f87a0;opacity:.6"></div>
<div style="position:absolute;left:1771.0px;top:166.1px;width:10.5px;height:2px;background:#8a6350;opacity:.62"></div>
<div style="position:absolute;left:1763.5px;top:168.9px;width:10.5px;height:2px;background:#5f87a0;opacity:.6"></div>
<div style="position:absolute;left:1775.5px;top:168.9px;width:27.0px;height:2px;background:#8a6350;opacity:.62"></div>
<div style="position:absolute;left:1763.5px;top:171.8px;width:18.0px;height:2px;background:#3f6f9e;opacity:.62"></div>
<div style="position:absolute;left:1763.5px;top:177.4px;width:13.5px;height:2px;background:#3f6f9e;opacity:.62"></div>
<div style="position:absolute;left:1763.5px;top:180.2px;width:6.0px;height:2px;background:#5f87a0;opacity:.6"></div>
<div style="position:absolute;left:1771.0px;top:180.2px;width:15.0px;height:2px;background:#8a6350;opacity:.62"></div>
<div style="position:absolute;left:1763.5px;top:183.0px;width:9.0px;height:2px;background:#5f87a0;opacity:.6"></div>
<div style="position:absolute;left:1774.0px;top:183.0px;width:27.0px;height:2px;background:#8a6350;opacity:.62"></div>
<div style="position:absolute;left:1763.5px;top:185.8px;width:10.5px;height:2px;background:#5f87a0;opacity:.6"></div>
<div style="position:absolute;left:1775.5px;top:185.8px;width:31.5px;height:2px;background:#8a6350;opacity:.62"></div>
<div style="position:absolute;left:1763.5px;top:188.6px;width:18.0px;height:2px;background:#3f6f9e;opacity:.62"></div>
<div style="position:absolute;left:1763.5px;top:194.2px;width:15.0px;height:2px;background:#3f6f9e;opacity:.62"></div>
<div style="position:absolute;left:1763.5px;top:197.0px;width:10.5px;height:2px;background:#5f87a0;opacity:.6"></div>
<div style="position:absolute;left:1775.5px;top:197.0px;width:12.0px;height:2px;background:#8a6350;opacity:.62"></div>
<div style="position:absolute;left:1763.5px;top:199.8px;width:9.0px;height:2px;background:#5f87a0;opacity:.6"></div>
<div style="position:absolute;left:1774.0px;top:199.8px;width:13.5px;height:2px;background:#8a6350;opacity:.62"></div>
<div style="position:absolute;left:1763.5px;top:202.7px;width:19.5px;height:2px;background:#3f6f9e;opacity:.62"></div>
<div style="position:absolute;left:1760.5px;top:208.3px;width:27.0px;height:2px;background:#3f6f9e;opacity:.62"></div>
<div style="position:absolute;left:1757.5px;top:211.1px;width:9.0px;height:2px;background:#3f6f9e;opacity:.62"></div>
<div style="position:absolute;left:1751.2px;top:129.6px;width:3.6px;height:6.1px;background:#1474c4"></div>
<div style="position:absolute;left:1751.2px;top:137.6px;width:3.6px;height:2.8px;background:#1474c4"></div>
<div style="position:absolute;left:1751.2px;top:143.1px;width:3.6px;height:2.8px;background:#1474c4"></div>
<div style="position:absolute;left:1751.2px;top:148.7px;width:3.6px;height:11.1px;background:#1474c4"></div>
<div style="position:absolute;left:1751.2px;top:163.0px;width:3.6px;height:28.3px;background:#1474c4"></div>
<div style="position:absolute;left:1751.2px;top:193.7px;width:3.6px;height:11.9px;background:#1474c4"></div>
<div style="position:absolute;left:1751.2px;top:208.9px;width:3.6px;height:4.6px;background:#d6475a"></div>
<svg style="position:absolute;left:1900px;top:129px" width="2" height="666"><rect x="0.20" y="0.60" width="1.20" height="665.40" fill="#1a1a1a"/></svg>
<div style="position:absolute;left:1901.8px;top:138.1px;width:6.6px;height:24.900000000000006px;background:#1667ae;"></div>
<div style="position:absolute;left:1901.8px;top:173.1px;width:6.6px;height:14.400000000000006px;background:#1667ae;"></div>
<div style="position:absolute;left:1901.8px;top:198px;width:6.6px;height:12.900000000000006px;background:#1667ae;"></div>
<div style="position:absolute;left:1901.8px;top:221.7px;width:6.6px;height:48.30000000000001px;background:#1667ae;"></div>
<div style="position:absolute;left:1901.8px;top:280.9px;width:6.6px;height:119.80000000000001px;background:#1667ae;"></div>
<div style="position:absolute;left:1901.8px;top:413.1px;width:6.6px;height:48.599999999999966px;background:#1667ae;"></div>
<div style="position:absolute;left:1901.8px;top:471.5px;width:6.6px;height:13.5px;background:#1667ae;"></div>
<div style="position:absolute;left:1901.8px;top:485px;width:6.6px;height:11.699999999999989px;background:#b4536b;"></div>
<svg style="position:absolute;left:1901px;top:292px" width="19" height="3"><rect x="0.80" y="0.40" width="18.20" height="2.20" fill="#9a9a9a"/></svg>
<span class="t s" style="left:600.7px;top:814.2px;font-size:15.1px;color:#9d9d9d;transform:scaleX(0.9122);">PROBLEMAS</span>
<span class="t s" style="left:720.0px;top:814.2px;font-size:15.1px;color:#9d9d9d;transform:scaleX(0.9383);">SAÍDA</span>
<span class="t s" style="left:796.5px;top:814.2px;font-size:15.1px;color:#9d9d9d;transform:scaleX(0.9176);">CONSOLE DE DEPURAÇÃO</span>
<span class="t s" style="left:1012.2px;top:814.2px;font-size:15.1px;color:#e7e7e7;transform:scaleX(0.9512);">TERMINAL</span>
<span class="t s" style="left:1118.4px;top:814.2px;font-size:15.1px;color:#9d9d9d;transform:scaleX(0.8933);">PORTAS</span>
<svg style="position:absolute;left:1009px;top:837px" width="79" height="3"><rect x="0.70" y="0.40" width="78.00" height="2.00" fill="#0078d4"/></svg>
<span class="t m" style="left:600.8px;top:857.3px;font-size:16.462px"><span style="color:#d0d0d0;">                    </span><span style="color:#7c7c7c;">|</span><span style="color:#d0d0d0;"> </span><span style="color:#e5e5e5;font-weight:700;">Initial total</span><span style="color:#d0d0d0;"> </span><span style="color:#7c7c7c;">|</span><span style="color:#d0d0d0;"> </span><span style="color:#e5e5e5;font-weight:700;">634.11 kB</span></span>
<span class="t m" style="left:600.8px;top:905.1px;font-size:16.462px"><span style="color:#d0d0d0;">Application bundle generation complete. [0.663 seconds]</span></span>
<span class="t m" style="left:600.8px;top:952.9px;font-size:16.462px"><span style="color:#d0d0d0;">Page reload sent to client(s).</span></span>
<span class="t m" style="left:600.8px;top:976.8px;font-size:16.462px"><span style="color:#7c7c7c;">16:24:00</span><span style="color:#d0d0d0;"> </span><span style="color:#29b8db;font-weight:700;">[vite]</span><span style="color:#d0d0d0;">    </span><span style="color:#38a654;">new dependencies optimized: </span><span style="color:#dbd118;">@angular/forms</span></span>
<span class="t m" style="left:600.8px;top:1000.7px;font-size:16.462px"><span style="color:#7c7c7c;">16:24:00</span><span style="color:#d0d0d0;"> </span><span style="color:#29b8db;font-weight:700;">[vite]</span><span style="color:#d0d0d0;">    </span><span style="color:#38a654;">optimized dependencies changed. reloading</span></span>
<svg style="position:absolute;left:761.2px;top:974.2px" width="21" height="20" viewBox="0 0 21 20"><g fill="#f6c433"><path d="M13 1.6 Q14.6 8 20.4 9.8 Q14.6 11.6 13 18.2 Q11.4 11.6 5.6 9.8 Q11.4 8 13 1.6Z" stroke="#f6c433" stroke-width="1.6" stroke-linejoin="round"/><path d="M4.4 1.2 Q5 4 7.6 4.6 Q5 5.2 4.4 8 Q3.8 5.2 1.2 4.6 Q3.8 4 4.4 1.2Z" stroke="#f6c433" stroke-width="1" stroke-linejoin="round"/><path d="M5 12.4 Q5.5 15 7.8 15.6 Q5.5 16.2 5 18.8 Q4.5 16.2 2.2 15.6 Q4.5 15 5 12.4Z" stroke="#f6c433" stroke-width="1" stroke-linejoin="round"/></g></svg>
<svg style="position:absolute;left:761.2px;top:998.1px" width="21" height="20" viewBox="0 0 21 20"><g fill="#f6c433"><path d="M13 1.6 Q14.6 8 20.4 9.8 Q14.6 11.6 13 18.2 Q11.4 11.6 5.6 9.8 Q11.4 8 13 1.6Z" stroke="#f6c433" stroke-width="1.6" stroke-linejoin="round"/><path d="M4.4 1.2 Q5 4 7.6 4.6 Q5 5.2 4.4 8 Q3.8 5.2 1.2 4.6 Q3.8 4 4.4 1.2Z" stroke="#f6c433" stroke-width="1" stroke-linejoin="round"/><path d="M5 12.4 Q5.5 15 7.8 15.6 Q5.5 16.2 5 18.8 Q4.5 16.2 2.2 15.6 Q4.5 15 5 12.4Z" stroke="#f6c433" stroke-width="1" stroke-linejoin="round"/></g></svg>
<svg style="position:absolute;left:600px;top:1019px" width="13" height="26"><rect x="2" y="1.8" width="8.2" height="21.8" fill="none" stroke="#d4d4d4" stroke-width="1.6"/></svg>
<svg style="position:absolute;left:833px;top:959.6px" width="10" height="23"><path d="M2.2 1.2 H3.4 Q4.6 1.2 4.6 2.4 M7 1.2 H5.8 Q4.6 1.2 4.6 2.4 V20.6 Q4.6 21.8 3.4 21.8 H2.2 M4.6 20.6 Q4.6 21.8 5.8 21.8 H7" fill="none" stroke="#111" stroke-width="2.6" opacity=".75"/><path d="M2.2 1.2 H3.4 Q4.6 1.2 4.6 2.4 M7 1.2 H5.8 Q4.6 1.2 4.6 2.4 V20.6 Q4.6 21.8 3.4 21.8 H2.2 M4.6 20.6 Q4.6 21.8 5.8 21.8 H7" fill="none" stroke="#e6e6e6" stroke-width="1.2"/></svg>
<svg style="position:absolute;left:1597.4px;top:810.4px" width="24" height="21" viewBox="0 0 24 21"><g fill="none" stroke="#cccccc" stroke-width="1.7" stroke-linejoin="round"><path d="M3.4 1 H22.6 L20.6 19.8 H1.2 Z"/><path d="M6.4 6.4 L11 10.4 L6 14.2 M11.6 14.6 H16.4"/></g></svg>
<span class="t s" style="left:1626.0px;top:812.0px;font-size:17px;color:#cccccc;transform:scaleX(0.9358);">node</span>
<svg style="position:absolute;left:1676.4px;top:811.4px" width="18.8" height="18.8"><path d="M9.4 0 V18.8 M0 9.4 H18.8" stroke="#cccccc" stroke-width="1.7" fill="none"/></svg>
<svg style="position:absolute;left:1703.4px;top:818.6px" width="11.4" height="7"><path d="M0.6 0.8 L5.7 5.8 L10.8 0.8" stroke="#cccccc" stroke-width="1.5" fill="none"/></svg>
<svg style="position:absolute;left:1732.4px;top:811.6px" width="19.2" height="18.4"><g fill="none" stroke="#cccccc" stroke-width="1.8"><rect x="0.9" y="0.9" width="17.4" height="16.6" rx="1.6"/><path d="M9.6 1 V17.4"/></g></svg>
<svg style="position:absolute;left:1768.6px;top:810.8px" width="17" height="20" viewBox="0 0 17 20"><g fill="none" stroke="#cccccc" stroke-width="1.6"><path d="M0.4 4.4 H16.6 M5.4 4.2 V2 Q5.4 1 6.4 1 H10.6 Q11.6 1 11.6 2 V4.2"/><path d="M2.4 4.6 L3.2 18 Q3.3 19 4.3 19 H12.7 Q13.7 19 13.8 18 L14.6 4.6"/><path d="M6.4 7.6 V15.6 M8.5 7.6 V15.6 M10.6 7.6 V15.6" stroke-width="1.3"/></g></svg>
<div style="position:absolute;left:1805.6px;top:819.8px;width:3.5px;height:3.5px;border-radius:50%;background:#ccc"></div>
<div style="position:absolute;left:1812.6px;top:819.8px;width:3.5px;height:3.5px;border-radius:50%;background:#ccc"></div>
<div style="position:absolute;left:1819.6px;top:819.8px;width:3.5px;height:3.5px;border-radius:50%;background:#ccc"></div>
<svg style="position:absolute;left:1843px;top:815.0px" width="16.4" height="10"><path d="M0.8 9 L8.2 1.6 L15.6 9" stroke="#cccccc" stroke-width="1.8" fill="none"/></svg>
<svg style="position:absolute;left:1881px;top:813.6px" width="13.6" height="13.6"><path d="M0.8 0.8 L12.8 12.8 M12.8 0.8 L0.8 12.8" stroke="#cccccc" stroke-width="1.8" fill="none"/></svg>
<div style="position:absolute;left:1905.8px;top:1018px;width:14.2px;height:28.4px;background:#3b3b3b;"></div>
<svg style="position:absolute;left:1906px;top:852px" width="4" height="5"><rect x="0.40" y="0.60" width="3.60" height="3.60" fill="#6a6a6a"/></svg>
<svg style="position:absolute;left:16px;top:1053.4px" width="15" height="16.4" viewBox="0 0 15 16.4"><g fill="none" stroke="#ffffff" stroke-width="1.7"><path d="M1 5.8 L6.2 10.8 L1 15.6"/><path d="M14 0.8 L8.8 5.6 L14 10.6"/></g></svg>
<svg style="position:absolute;left:56.4px;top:1051.2px" width="17" height="21" viewBox="0 0 17 21"><g fill="none" stroke="#cccccc" stroke-width="1.6"><circle cx="4.2" cy="3.4" r="2.5"/><circle cx="4.2" cy="17.4" r="2.5"/><circle cx="13" cy="6" r="2.5"/><path d="M4.2 6 V14.8 M13 8.6 Q13 12 9 12.2 Q4.4 12.4 4.2 14.6"/></g></svg>
<span class="t s" style="left:80.6px;top:1053.9px;font-size:17.1px;color:#cccccc;transform:scaleX(0.9608);">master*</span>
<svg style="position:absolute;left:146.4px;top:1055.6px" width="18.6" height="13.6" viewBox="0 0 18.6 13.6"><g fill="none" stroke="#cccccc" stroke-width="1.6"><path d="M6.2 12.4 H4.4 Q1 12.2 1 8.8 Q1.2 5.8 4.4 5.6 Q5.4 1 9.6 1 Q13.6 1.2 14.4 5.2 Q17.8 5.6 17.6 9 Q17.4 12.2 14.4 12.4 H12.4"/><path d="M9.3 13.4 V6.6 M6.4 9.2 L9.3 6.4 L12.2 9.2"/></g></svg>
<svg style="position:absolute;left:185.8px;top:1053.4px" width="18" height="18" viewBox="0 0 18 18"><g fill="none" stroke="#cccccc" stroke-width="1.6"><circle cx="9" cy="9" r="7.8"/><path d="M5.6 5.6 L12.4 12.4 M12.4 5.6 L5.6 12.4"/></g></svg>
<span class="t s" style="left:209.5px;top:1053.9px;font-size:17.1px;color:#cccccc;transform:scaleX(0.9668);">0</span>
<svg style="position:absolute;left:224.2px;top:1053px" width="17.8" height="16.4" viewBox="0 0 17.8 16.4"><g fill="none" stroke="#cccccc" stroke-width="1.6" stroke-linejoin="round"><path d="M8.9 1.2 L16.8 15.2 H1 Z"/><path d="M8.9 6 V10.6 M8.9 11.8 V13.6"/></g></svg>
<span class="t s" style="left:247.9px;top:1053.9px;font-size:17.1px;color:#cccccc;transform:scaleX(0.9353);">0</span>
<svg style="position:absolute;left:281.2px;top:1053.4px" width="18.4" height="17.6" viewBox="0 0 18.4 17.6"><g fill="none" stroke="#cccccc" stroke-width="1.5"><path d="M3.6 1.4 Q1 5.4 3.6 9.6 M6.2 3 Q4.8 5.4 6.2 8 M14.8 1.4 Q17.4 5.4 14.8 9.6 M12.2 3 Q13.6 5.4 12.2 8"/><circle cx="9.2" cy="5.4" r="1.2" fill="#cccccc"/><path d="M9.2 6.6 L5 16.8 M9.2 6.6 L13.4 16.8 M6.4 13.2 H12 M7.4 10.6 L12.2 15.4 M11 10.6 L6.2 15.4"/></g></svg>
<span class="t s" style="left:303.7px;top:1053.9px;font-size:17.1px;color:#cccccc;transform:scaleX(0.9353);">0</span>
<span class="t s" style="left:1437.2px;top:1053.9px;font-size:17.1px;color:#cccccc;transform:scaleX(0.9441);">Ln 14, Col 17</span>
<span class="t s" style="left:1555.2px;top:1053.9px;font-size:17.1px;color:#cccccc;transform:scaleX(0.8998);">Espaços: 2</span>
<span class="t s" style="left:1654.3px;top:1053.9px;font-size:17.1px;color:#cccccc;transform:scaleX(0.9290);">UTF-8</span>
<span class="t s" style="left:1720.9px;top:1053.9px;font-size:17.1px;color:#cccccc;transform:scaleX(0.8311);">CRLF</span>
<span class="t s" style="left:1774.0px;top:1053.9px;font-size:17.1px;color:#cccccc;transform:scaleX(0.9281);">HTML</span>
<svg style="position:absolute;left:1836.4px;top:1053.6px" width="21.4" height="17.6" viewBox="0 0 21.4 17.6"><g fill="none" stroke="#cccccc" stroke-width="1.7"><path d="M3.4 7.6 Q2.4 2 6.6 1.4 Q10.2 1 10.7 3.6 Q11.2 1 14.8 1.4 Q19 2 18 7.6"/><path d="M3.4 7 Q1 8 1 10.4 V12.4 Q4.6 16.6 10.7 16.6 Q16.8 16.6 20.4 12.4 V10.4 Q20.4 8 18 7"/><path d="M3.6 7.6 Q7 9.4 10.7 6.2 Q14.4 9.4 17.8 7.6" /></g><rect x="7" y="10.2" width="1.9" height="3.6" rx="0.9" fill="#cccccc"/><rect x="12.5" y="10.2" width="1.9" height="3.6" rx="0.9" fill="#cccccc"/></svg>
<svg style="position:absolute;left:1880.6px;top:1053.2px" width="17" height="18.6" viewBox="0 0 17 18.6"><g fill="none" stroke="#cccccc" stroke-width="1.6" stroke-linejoin="round"><path d="M1.4 14.2 Q3.4 12.6 3.4 8 Q3.4 1.6 8.5 1.2 Q13.6 1.6 13.6 8 Q13.6 12.6 15.6 14.2 Z"/><path d="M6.4 15.6 Q8.5 18.8 10.6 15.6"/></g></svg>
<svg style="position:absolute;left:15px;top:63px" width="36" height="40" viewBox="15 63 36 40"><g fill="none" stroke="#d7d7d7" stroke-width="2.5" stroke-linejoin="round">
<path d="M28.9 67.1 H40.6 L46 72.6 V88.6 Q46 90.5 44.1 90.5 H28.9 Q26.8 90.5 26.8 88.6 V69 Q26.8 67.1 28.9 67.1 Z"/>
<path d="M40.2 67.4 V72.9 H45.8" stroke-width="1.6"/>
<path d="M26.6 75.1 H20.2 Q18.2 75.1 18.2 77.1 V96.6 Q18.2 98.6 20.2 98.6 H35.6 Q37.6 98.6 37.6 96.6 V90.8"/>
</g></svg>
<svg style="position:absolute;left:14px;top:130px" width="40" height="40" viewBox="14 130 40 40"><g fill="none" stroke="#868686" stroke-width="2.4">
<circle cx="37.3" cy="144.9" r="10.9"/><path d="M29.4 153.2 L17.6 166.4"/></g></svg>
<svg style="position:absolute;left:14px;top:198px" width="44" height="44" viewBox="14 198 44 44"><g fill="none" stroke="#868686" stroke-width="2.3">
<circle cx="25.4" cy="206.7" r="4.3"/><circle cx="25.4" cy="229.1" r="4.3"/><circle cx="39.9" cy="212.3" r="4.3"/>
<path d="M25.4 211 V224.8 M39.9 216.6 Q39.6 220.4 35.4 220.6 H25.6"/></g>
<circle cx="44.3" cy="229.5" r="11.3" fill="#0078d4"/></svg>
<span class="t s" style="left:40.8px;top:223.5px;font-size:12.6px;color:#ffffff;font-weight:700;">8</span>
<svg style="position:absolute;left:12px;top:264px" width="42" height="44" viewBox="12 264 42 44"><g fill="none" stroke="#868686" stroke-width="2.3" stroke-linejoin="miter">
<path d="M27.2 284.6 V269.6 L48.4 282.8 L35.6 291.4"/>
<ellipse cx="24.3" cy="295.0" rx="4.9" ry="6.4"/>
<path d="M20.4 289 Q24.3 284.4 28.2 289" />
<path d="M19.4 291.6 L15.6 288.6 M19.2 295.4 H15 M19.8 299 L16 302.2 M29.2 291.6 L33 288.6 M29.4 295.4 H33.6 M28.8 299 L32.6 302.2" stroke-width="2"/>
</g></svg>
<svg style="position:absolute;left:13px;top:333px" width="40" height="40" viewBox="13 333 40 40"><g fill="none" stroke="#868686" stroke-width="2.3" stroke-linejoin="round">
<path d="M17.2 342.8 H30 V355.8 H42.7 V368.7 H17.2 Z"/><path d="M17.2 355.8 H30 V368.7"/>
<rect x="36.3" y="337.4" width="12.2" height="12.4" rx="1"/></g></svg>
<svg style="position:absolute;left:14px;top:402px" width="38" height="38" viewBox="14 402 38 38">
<circle cx="32.8" cy="420.5" r="16.8" fill="#868686"/>
<path d="M23 411.2 L35.4 409.4 Q43.6 410.6 43.6 414.4 V426.4 L41.8 429.6 L30.6 431.2 Q22 430 22 426.4 V414.4 Z" fill="#181818"/>
<path d="M28.6 416.2 L36.4 415 Q38.4 415.2 38.4 417 V423.6 L37.6 425 L29.6 426.2 Q27.6 426 27.6 424 V417.6 Z" fill="#868686"/>
<path d="M35.4 409 L37 414.6 M30.4 431.6 L29 426.2" stroke="#868686" stroke-width="1.4" fill="none"/>
</svg>
<svg style="position:absolute;left:14px;top:468px" width="40" height="40" viewBox="14 468 40 40"><g fill="none" stroke="#868686" stroke-width="2.3" stroke-linejoin="round">
<path d="M44.5 483.6 V476 Q44.5 473.9 42.4 473.9 H20.7 Q18.6 473.9 18.6 476 V488.4 Q18.6 490.4 20.7 490.4 H22.2 V496.2 L26.8 492.4"/>
<path d="M31.6 486.4 H44.4 Q46.5 486.4 46.5 488.5 V495.5 Q46.5 497.6 44.4 497.6 H43.8 L41.8 501.2 L38.6 497.6 H31.6 Q29.5 497.6 29.5 495.5 V488.5 Q29.5 486.4 31.6 486.4 Z"/></g></svg>
<svg style="position:absolute;left:14px;top:926px" width="38" height="38" viewBox="14 926 38 38"><g fill="none" stroke="#868686" stroke-width="2.2">
<circle cx="32.8" cy="944.7" r="15.7"/><circle cx="32.8" cy="940.2" r="5.9"/>
<path d="M22.2 956 Q24 948.6 32.8 948.6 Q41.6 948.6 43.4 956"/></g></svg>
<svg style="position:absolute;left:14px;top:994px" width="38" height="38" viewBox="14 994 38 38"><g fill="none" stroke="#868686" stroke-width="2.2" stroke-linejoin="round">
<path d="M30.6 1001.1 L30.7 996.2 L34.9 996.2 L35.0 1001.1 L37.2 1001.8 L39.3 1002.9 L42.8 999.5 L45.8 1002.5 L42.4 1006.0 L43.5 1008.1 L44.2 1010.3 L49.1 1010.4 L49.1 1014.6 L44.2 1014.7 L43.5 1016.9 L42.4 1019.0 L45.8 1022.5 L42.8 1025.5 L39.3 1022.1 L37.2 1023.2 L35.0 1023.9 L34.9 1028.8 L30.7 1028.8 L30.6 1023.9 L28.4 1023.2 L26.3 1022.1 L22.8 1025.5 L19.8 1022.5 L23.2 1019.0 L22.1 1016.9 L21.4 1014.7 L16.5 1014.6 L16.5 1010.4 L21.4 1010.3 L22.1 1008.1 L23.2 1006.0 L19.8 1002.5 L22.8 999.5 L26.3 1002.9 L28.4 1001.8 Z"/><circle cx="32.8" cy="1012.5" r="4.2"/></g></svg>
</body></html>
